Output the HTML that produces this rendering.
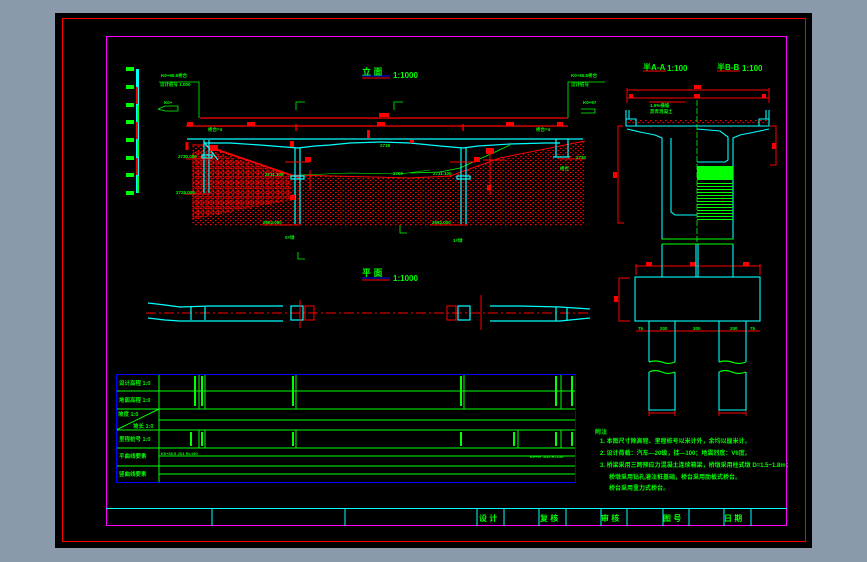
<!DOCTYPE html>
<html><head><meta charset="utf-8"><style>
html,body{margin:0;padding:0;background:#8a9aab;width:867px;height:562px;overflow:hidden}
svg{display:block}
text{font-family:"Liberation Sans","Noto Sans CJK SC",sans-serif;font-weight:bold}
</style></head><body>
<svg width="867" height="562" viewBox="0 0 867 562" xmlns="http://www.w3.org/2000/svg">
<defs>
<pattern id="soil" width="5" height="4" patternUnits="userSpaceOnUse">
<rect x="0" y="0" width="1.6" height="1.2" fill="#f00"/><rect x="2.5" y="2" width="1.6" height="1.2" fill="#f00"/>
</pattern>
<pattern id="rock" width="5" height="5" patternUnits="userSpaceOnUse">
<circle cx="2.5" cy="2.5" r="1.6" fill="none" stroke="#f00" stroke-width="0.9"/>
</pattern>
<pattern id="hatch" width="4" height="3" patternUnits="userSpaceOnUse">
<rect width="4" height="1" fill="#0f0"/>
</pattern>
</defs>
<rect x="55" y="13" width="757" height="535" fill="#000"/>
<rect x="62.5" y="18.5" width="743" height="523" fill="none" stroke="#f00" stroke-width="1"/>
<rect x="106.5" y="36.5" width="680" height="489" fill="none" stroke="#f0f" stroke-width="1"/>

<rect x="136" y="69" width="3" height="124" fill="#0ff"/>
<g fill="#f00"><rect x="136" y="87" width="2" height="17"/><rect x="136" y="122" width="2" height="17"/><rect x="136" y="158" width="2" height="17"/></g>
<g fill="#0f0"><rect x="137" y="105" width="2" height="17"/><rect x="137" y="140" width="2" height="17"/><rect x="137" y="176" width="2" height="17"/></g>
<g fill="#0f0"><rect x="126" y="67" width="8" height="4"/><rect x="126" y="85" width="8" height="4"/><rect x="126" y="103" width="8" height="4"/><rect x="126" y="120" width="8" height="4"/><rect x="126" y="138" width="8" height="4"/><rect x="126" y="156" width="8" height="4"/><rect x="126" y="173" width="8" height="4"/><rect x="126" y="191" width="8" height="4"/></g>

<text x="362" y="75" fill="#0f0" font-size="9">立 面</text>
<line x1="362" y1="76" x2="390" y2="76" stroke="#00f" stroke-width="1"/>
<line x1="362" y1="78" x2="390" y2="78" stroke="#f00" stroke-width="1"/>
<text x="393" y="78" fill="#0f0" font-size="8">1:1000</text>

<g stroke="#0f0" fill="none" stroke-width="0.8">
<polyline points="159,82 199,82 199,118"/>
<polyline points="568,118 568,82 605,82"/>
<polyline points="158,109 165,106 178,106 178,111 165,111 158,109"/>
<polyline points="296,110 296,102 305,102"/>
<polyline points="394,110 394,102 403,102"/>
<polyline points="400,225 400,233 407,233"/>
<polyline points="298,252 298,259 305,259"/>
<polyline points="581,109 595,109 595,113 581,113"/>
</g>
<g fill="#0f0" font-size="4.5"><text x="161" y="77">K0+65.5桥台</text><text x="160" y="86">设计桩号 1.000</text><text x="571" y="77">K0+65.5桥台</text><text x="571" y="86">设计桩号</text><text x="583" y="104">K0+97</text><text x="164" y="104">K0+</text></g>

<g stroke="#f00" stroke-width="1.3" fill="none">
<line x1="200" y1="118" x2="568" y2="118"/>
<line x1="186" y1="126" x2="568" y2="126"/>
<line x1="296" y1="124" x2="296" y2="131"/><line x1="463" y1="124" x2="463" y2="131"/>
</g>
<g fill="#f00"><rect x="379" y="113" width="10" height="4"/><rect x="187" y="122" width="6" height="4"/><rect x="247" y="122" width="8" height="4"/><rect x="377" y="122" width="8" height="4"/><rect x="506" y="122" width="8" height="4"/><rect x="557" y="122" width="6" height="4"/><rect x="367" y="130" width="3" height="8"/><rect x="290" y="141" width="4" height="6"/></g>
<g fill="#0f0" font-size="4.5"><text x="208" y="131">桥台=4</text><text x="536" y="131">桥台=4</text></g>

<path d="M192,145 L205,145 L290,175 L410,178 L450,176 L495,160 L585,142 L585,226 L192,226 Z" fill="url(#soil)"/>
<path d="M192,152 L205,150 L290,175 L292,200 L250,208 L200,218 L192,220 Z" fill="url(#rock)"/>
<path d="M205,146 L290,175 L300,178" fill="none" stroke="#f00" stroke-width="1.2"/>
<path d="M192,145 L205,145 L292,175 L410,178 L450,176 L500,158 L585,141" fill="none" stroke="#f00" stroke-width="1"/>
<polyline points="410,173 440,172 460,168 495,152 510,145" fill="none" stroke="#0f0" stroke-width="0.8"/>
<polyline points="300,175 350,173 400,174 430,170" fill="none" stroke="#0f0" stroke-width="0.6"/>
<line x1="187" y1="142" x2="187" y2="150" stroke="#f00" stroke-width="3"/>

<g stroke="#0ff" fill="none" stroke-width="1.2">
<line x1="187" y1="139" x2="583" y2="139"/>
<polyline points="205,143 230,143 260,145 285,147 298,148 315,146 330,145 350,143 380,142 410,143 440,146 463,148 478,146 510,144 545,143 560,143"/>
<line x1="295" y1="148" x2="295" y2="224"/><line x1="300" y1="148" x2="300" y2="224"/>
<line x1="461" y1="148" x2="461" y2="224"/><line x1="466" y1="148" x2="466" y2="224"/>
<rect x="291" y="176" width="13" height="3"/><rect x="457" y="176" width="13" height="3"/>
<line x1="204" y1="140" x2="204" y2="193"/><line x1="209" y1="140" x2="209" y2="193"/>
<line x1="204" y1="142" x2="218" y2="160"/>
<rect x="202" y="155" width="10" height="3"/>
<line x1="556" y1="139" x2="556" y2="157"/><line x1="568" y1="139" x2="568" y2="157"/>
<line x1="553" y1="157" x2="570" y2="157"/>
</g>
<g stroke="#f00" stroke-width="1" fill="none">
<line x1="186" y1="159" x2="215" y2="159"/><line x1="183" y1="194" x2="210" y2="194"/>
<line x1="560" y1="159" x2="585" y2="159"/>
<line x1="490" y1="148" x2="490" y2="195"/><line x1="483" y1="160" x2="505" y2="160"/>
<line x1="285" y1="162" x2="310" y2="162"/><line x1="450" y1="162" x2="475" y2="162"/>
<line x1="262" y1="225" x2="300" y2="225"/><line x1="430" y1="225" x2="468" y2="225"/>
<line x1="310" y1="170" x2="310" y2="190"/>
</g>
<g fill="#f00"><rect x="305" y="157" width="6" height="5"/><rect x="474" y="157" width="6" height="5"/><rect x="410" y="140" width="4" height="3"/><rect x="290" y="195" width="5" height="5"/><rect x="487" y="185" width="4" height="5"/><rect x="486" y="148" width="8" height="6"/><rect x="210" y="145" width="8" height="6"/></g>
<g fill="#0f0" font-size="4.5"><text x="178" y="158">2730.000</text><text x="176" y="194">2725.000</text><text x="263" y="224">2692.000</text><text x="432" y="224">2692.000</text><text x="380" y="147">2718</text><text x="265" y="176">2711.100</text><text x="433" y="175">2711.100</text><text x="393" y="175">2709</text><text x="576" y="159">2730</text><text x="285" y="239">0#墩</text><text x="453" y="242">1#墩</text><text x="560" y="170">桥台</text></g>

<text x="362" y="276" fill="#0f0" font-size="9">平 面</text>
<line x1="362" y1="278" x2="390" y2="278" stroke="#00f" stroke-width="1"/>
<line x1="362" y1="280" x2="390" y2="280" stroke="#f00" stroke-width="1"/>
<text x="393" y="281" fill="#0f0" font-size="8">1:1000</text>
<line x1="146" y1="313" x2="590" y2="313" stroke="#f00" stroke-width="1" stroke-dasharray="10,3,2,3"/>
<g stroke="#0ff" fill="none" stroke-width="1.2">
<polyline points="148,303 165,305 180,307 210,306 283,306"/>
<polyline points="148,318 165,320 180,321 210,321 283,321"/>
<line x1="191" y1="307" x2="191" y2="320"/><line x1="205" y1="307" x2="205" y2="320"/>
<rect x="291" y="306" width="12" height="14"/><rect x="458" y="306" width="12" height="14"/>
<polyline points="490,306 520,306 560,307 590,309"/>
<polyline points="490,321 530,321 560,321 590,318"/>
<line x1="556" y1="307" x2="556" y2="321"/><line x1="567" y1="307" x2="567" y2="321"/>
</g>
<g stroke="#f00" fill="none" stroke-width="1"><rect x="305" y="306" width="9" height="14"/><rect x="447" y="306" width="9" height="14"/>
<line x1="481" y1="295" x2="481" y2="330"/><line x1="300" y1="300" x2="300" y2="328"/></g>

<text x="643" y="70" fill="#0f0" font-size="8">半A-A</text><line x1="643" y1="71" x2="666" y2="71" stroke="#f00"/>
<text x="667" y="71" fill="#0f0" font-size="8">1:100</text>
<text x="717" y="70" fill="#0f0" font-size="8">半B-B</text><line x1="717" y1="71" x2="740" y2="71" stroke="#f00"/>
<text x="742" y="71" fill="#0f0" font-size="8">1:100</text>
<g stroke="#f00" fill="none" stroke-width="1">
<line x1="627" y1="90" x2="769" y2="90"/><line x1="627" y1="98" x2="769" y2="98"/>
<line x1="627" y1="88" x2="627" y2="103"/><line x1="769" y1="88" x2="769" y2="103"/>
<polyline points="623,126 618,126 618,223 624,223"/>
<polyline points="770,126 776,126 776,165 770,165"/>
<line x1="636" y1="266" x2="760" y2="266"/><line x1="636" y1="264" x2="636" y2="275"/><line x1="760" y1="264" x2="760" y2="275"/>
<polyline points="630,278 619,278 619,321 630,321"/>
<line x1="636" y1="331" x2="760" y2="331"/>
<line x1="649" y1="413" x2="675" y2="413"/><line x1="719" y1="413" x2="746" y2="413"/>
<line x1="649" y1="409" x2="649" y2="416"/><line x1="675" y1="409" x2="675" y2="416"/><line x1="719" y1="409" x2="719" y2="416"/><line x1="746" y1="409" x2="746" y2="416"/>
<line x1="649" y1="102" x2="685" y2="102"/>
</g>
<g fill="#f00"><rect x="694" y="85" width="7" height="4"/><rect x="629" y="94" width="4" height="4"/><rect x="694" y="94" width="6" height="4"/><rect x="762" y="94" width="4" height="4"/><rect x="613" y="172" width="4" height="6"/><rect x="772" y="143" width="4" height="6"/><rect x="646" y="262" width="6" height="4"/><rect x="690" y="262" width="6" height="4"/><rect x="743" y="262" width="6" height="4"/><rect x="614" y="296" width="4" height="6"/></g>
<rect x="628" y="120" width="140" height="3" fill="url(#soil)"/>
<g fill="#0f0" font-size="4.5"><text x="650" y="107">1.5%横坡</text><text x="650" y="113">沥青混凝土</text><text x="638" y="330">75</text><text x="660" y="330">200</text><text x="693" y="330">300</text><text x="730" y="330">200</text><text x="750" y="330">75</text></g>
<g stroke="#0ff" fill="none" stroke-width="1.1">
<polyline points="626,110 626,126 769,126 769,110"/>
<polyline points="626,119 636,119 636,126"/><polyline points="769,119 759,119 759,126"/>
<line x1="629" y1="110" x2="629" y2="119"/><line x1="766" y1="110" x2="766" y2="119"/>
<polyline points="627,129 640,132 655,135 662,138 662,239 733,239 733,138 740,135 755,132 769,129"/>
<polyline points="671,138 671,212 675,215 697,215"/>
<polyline points="697,129 720,131 728,137 728,160 725,162 697,162"/>
<polyline points="662,244 697,244 733,244"/>
<line x1="662" y1="244" x2="662" y2="277"/><line x1="733" y1="244" x2="733" y2="277"/>
<line x1="696" y1="244" x2="696" y2="277"/><line x1="698" y1="244" x2="698" y2="277"/>
<rect x="635" y="277" width="125" height="44"/>
<polyline points="649,321 649,362"/><polyline points="675,321 675,362"/>
<polyline points="649,372 649,410 675,410 675,372"/>
<polyline points="719,321 719,362"/><polyline points="746,321 746,362"/>
<polyline points="719,372 719,410 746,410 746,372"/>
</g>
<rect x="697" y="166" width="36" height="14" fill="#0f0"/>
<rect x="697" y="182" width="36" height="40" fill="url(#hatch)"/>
<line x1="697" y1="100" x2="697" y2="244" stroke="#0f0" stroke-dasharray="6,2" stroke-width="0.8"/>
<line x1="662" y1="239" x2="733" y2="239" stroke="#0f0"/>
<line x1="662" y1="244" x2="733" y2="244" stroke="#0f0"/>
<g fill="none" stroke="#0f0" stroke-width="1.2">
<path d="M649,362 q6,-2 13,0 q6,3 13,0"/><path d="M649,372 q6,-3 13,0 q6,3 13,0"/>
<path d="M719,362 q6,-2 13,0 q6,3 14,0"/><path d="M719,372 q6,-3 13,0 q6,3 14,0"/>
</g>

<g stroke="#0f0" stroke-width="1" fill="none">
<line x1="116" y1="391" x2="575" y2="391"/><line x1="116" y1="409" x2="575" y2="409"/>
<line x1="159" y1="420" x2="575" y2="420"/><line x1="116" y1="430" x2="575" y2="430"/>
<line x1="116" y1="448" x2="575" y2="448"/><line x1="116" y1="466" x2="575" y2="466"/>
<line x1="159" y1="474" x2="575" y2="474"/><line x1="159" y1="456" x2="575" y2="456"/>
<line x1="116" y1="430" x2="159" y2="409"/>
<line x1="199" y1="374" x2="199" y2="409"/><line x1="205" y1="374" x2="205" y2="409"/>
<line x1="296" y1="374" x2="296" y2="409"/><line x1="464" y1="374" x2="464" y2="409"/>
<line x1="561" y1="374" x2="561" y2="409"/>
<line x1="199" y1="430" x2="199" y2="448"/><line x1="205" y1="430" x2="205" y2="448"/>
<line x1="296" y1="430" x2="296" y2="448"/><line x1="518" y1="430" x2="518" y2="448"/><line x1="561" y1="430" x2="561" y2="448"/>
<line x1="159" y1="374" x2="159" y2="483"/>
</g>
<rect x="116.5" y="374.5" width="459" height="108" fill="none" stroke="#00f" stroke-width="1"/>
<g fill="#0f0" font-size="5.5"><text x="119" y="385">设计高程 1:0</text><text x="119" y="402">地面高程 1:0</text><text x="118" y="416">坡度 1:0</text><text x="133" y="428">坡长 1:0</text><text x="119" y="441">里程桩号 1:0</text><text x="119" y="458">平曲线要素</text><text x="119" y="476">竖曲线要素</text>
<text x="161" y="455" font-size="4">K0+65.5 JD1 R=150</text><text x="530" y="458" font-size="4">K0+97 JD2 R=150</text></g>
<g fill="#0f0"><rect x="194" y="376" width="2" height="30"/><rect x="201" y="376" width="2" height="30"/><rect x="292" y="376" width="2" height="30"/><rect x="460" y="376" width="2" height="30"/><rect x="555" y="376" width="2" height="30"/><rect x="571" y="376" width="2" height="30"/>
<rect x="190" y="432" width="2" height="14"/><rect x="201" y="432" width="2" height="14"/><rect x="292" y="432" width="2" height="14"/><rect x="460" y="432" width="2" height="14"/><rect x="513" y="432" width="2" height="14"/><rect x="555" y="432" width="2" height="14"/><rect x="571" y="432" width="2" height="14"/></g>

<g fill="#0f0" font-size="6"><text x="595" y="434">附注</text>
<text x="600" y="443">1. 本图尺寸除高程、里程桩号以米计外，余均以厘米计。</text>
<text x="600" y="455">2. 设计荷载：汽车—20级，挂—100；地震烈度：VII度。</text>
<text x="600" y="467">3. 桥梁采用三跨预应力混凝土连续箱梁，桥墩采用柱式墩 D=1.5~1.8m；</text>
<text x="609" y="479">桥墩采用钻孔灌注桩基础，桥台采用肋板式桥台。</text>
<text x="609" y="490">桥台采用重力式桥台。</text></g>

<g stroke="#0ff" stroke-width="1" fill="none">
<line x1="106" y1="508.5" x2="787" y2="508.5"/>
<line x1="212" y1="508" x2="212" y2="526"/><line x1="345" y1="508" x2="345" y2="526"/>
<line x1="477" y1="508" x2="477" y2="526"/><line x1="504" y1="508" x2="504" y2="526"/>
<line x1="539" y1="508" x2="539" y2="526"/><line x1="566" y1="508" x2="566" y2="526"/>
<line x1="601" y1="508" x2="601" y2="526"/><line x1="627" y1="508" x2="627" y2="526"/>
<line x1="663" y1="508" x2="663" y2="526"/><line x1="689" y1="508" x2="689" y2="526"/>
<line x1="724" y1="508" x2="724" y2="526"/><line x1="751" y1="508" x2="751" y2="526"/>
</g>
<g fill="#0f0" font-size="8"><text x="479" y="521">设 计</text><text x="540" y="521">复 核</text><text x="601" y="521">审 核</text><text x="663" y="521">图 号</text><text x="724" y="521">日 期</text></g>
</svg>
</body></html>
